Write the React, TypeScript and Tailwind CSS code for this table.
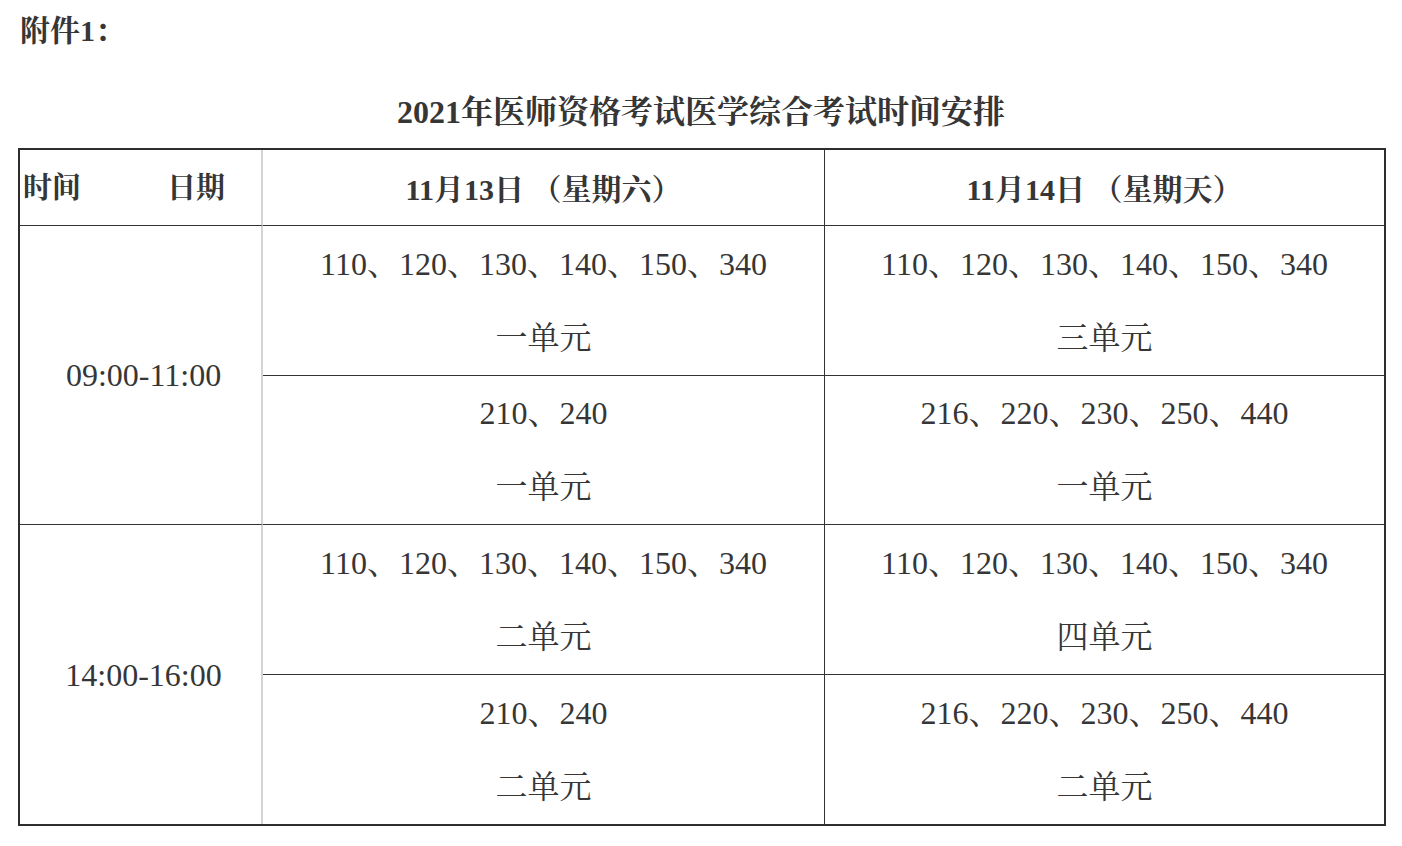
import React from "react";

const font = {
  fontFamily:
    '"Liberation Serif", "Noto Serif CJK SC", "Noto Sans CJK SC", serif',
};

function Cell({
  top,
  bottom,
  className,
}: {
  top: string;
  bottom: string;
  className: string;
}) {
  return (
    <div className={`flex flex-col items-center justify-center text-[32px] ${className}`}>
      <div className="leading-[74px] h-[74px]">{top}</div>
      <div className="leading-[74px] h-[74px]">{bottom}</div>
    </div>
  );
}

export default function App() {
  const a = "110、120、130、140、150、340";
  return (
    <div className="w-[1402px] h-[846px] bg-white text-[#363636]" style={font}>
      <div className="pl-[20px] pt-[10px] text-[30px] font-bold leading-[42px]">附件1：</div>
      <div className="mt-[39px] text-center text-[32px] font-bold leading-[42px]">
        2021年医师资格考试医学综合考试时间安排
      </div>
      <div className="ml-[18px] mt-[15px] w-[1368px] border-l-2 border-r-2 border-t-2 border-b-2 border-[#2e2e2e]">
        <div className="grid grid-cols-[243px_562px_559px]">
          {/* header */}
          <div className="h-[76px] flex items-center pl-[3px] pt-[3px] text-[29px] font-bold border-r-2 border-r-[#d4d4d4] border-b border-b-[#333]">
            <span>时间</span>
            <span className="ml-[86px]">日期</span>
          </div>
          <div className="h-[76px] flex items-center justify-center pt-[3px] text-[30px] font-bold border-r border-r-[#333] border-b border-b-[#333]">
            11月13日 （星期六）
          </div>
          <div className="h-[76px] flex items-center justify-center pt-[3px] text-[30px] font-bold border-b border-b-[#333]">
            11月14日 （星期天）
          </div>

          {/* morning */}
          <div className="row-span-2 flex items-center justify-center pl-[6px] text-[32px] border-r-2 border-r-[#d4d4d4] border-b border-b-[#333]">
            09:00-11:00
          </div>
          <Cell top={a} bottom="一单元" className="h-[150px] border-r border-r-[#333] border-b border-b-[#333]" />
          <Cell top={a} bottom="三单元" className="h-[150px] border-b border-b-[#333]" />
          <Cell top="210、240" bottom="一单元" className="h-[149px] border-r border-r-[#333] border-b border-b-[#333]" />
          <Cell top="216、220、230、250、440" bottom="一单元" className="h-[149px] border-b border-b-[#333]" />

          {/* afternoon */}
          <div className="row-span-2 flex items-center justify-center pl-[6px] text-[32px] border-r-2 border-r-[#d4d4d4]">
            14:00-16:00
          </div>
          <Cell top={a} bottom="二单元" className="h-[150px] border-r border-r-[#333] border-b border-b-[#333]" />
          <Cell top={a} bottom="四单元" className="h-[150px] border-b border-b-[#333]" />
          <Cell top="210、240" bottom="二单元" className="h-[149px] border-r border-r-[#333]" />
          <Cell top="216、220、230、250、440" bottom="二单元" className="h-[149px]" />
        </div>
      </div>
    </div>
  );
}
